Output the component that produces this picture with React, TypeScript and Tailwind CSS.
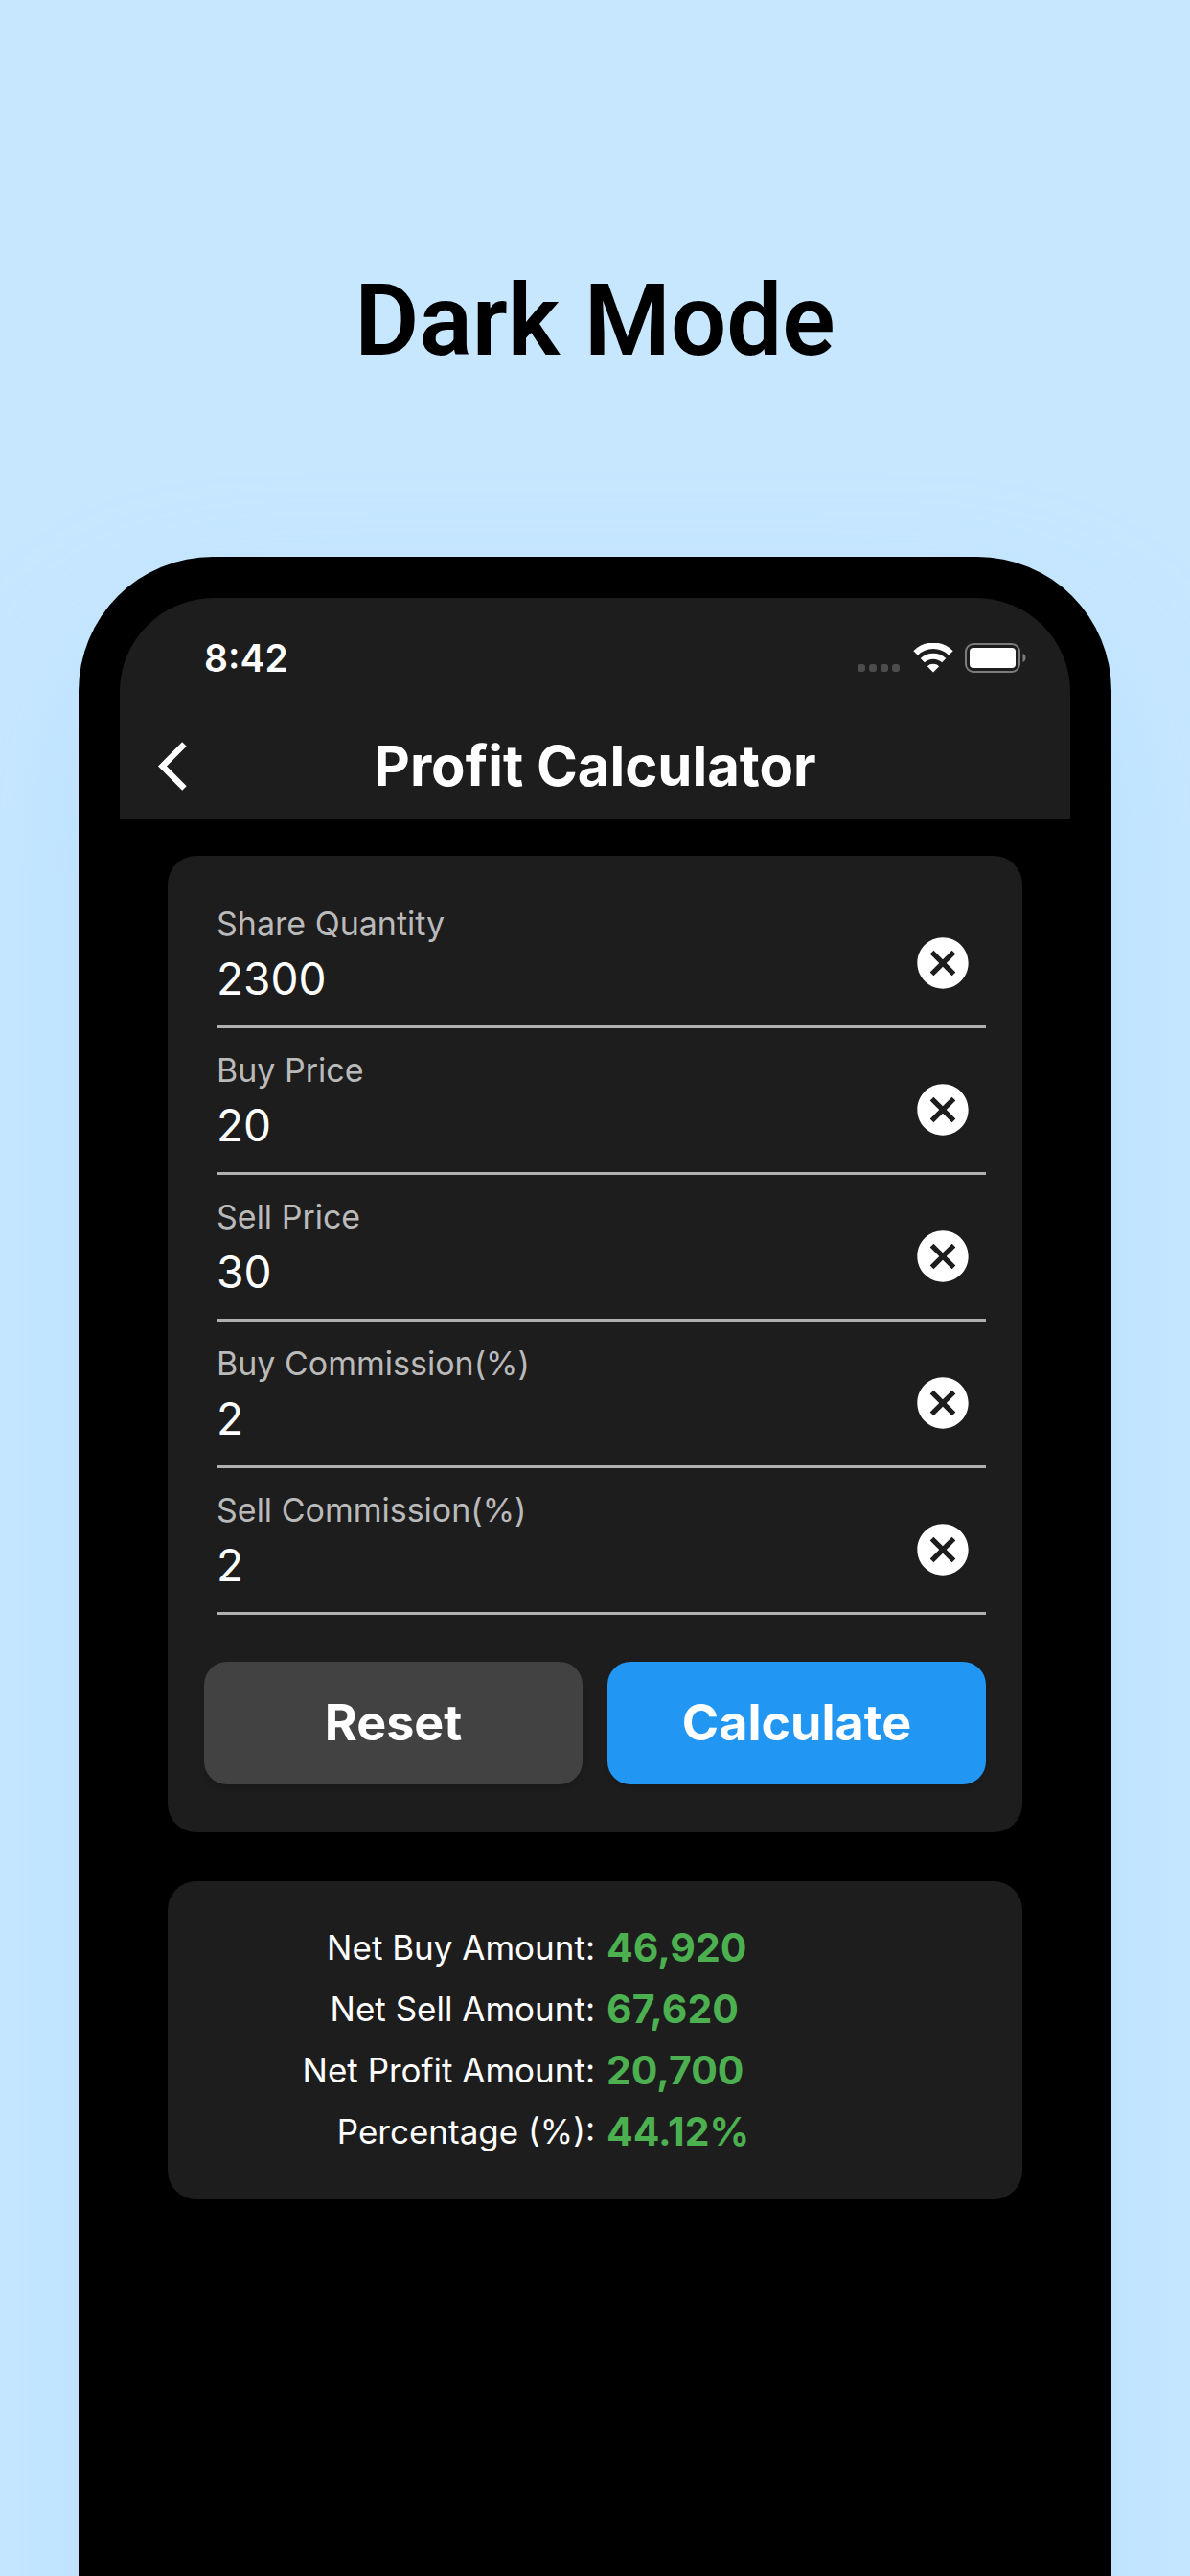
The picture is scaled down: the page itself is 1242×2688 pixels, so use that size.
import { useState } from "react";
import { MdArrowBackIos, MdCancel } from "react-icons/md";

const initialFields = [
  { id: "quantity", label: "Share Quantity", value: "2300" },
  { id: "buy", label: "Buy Price", value: "20" },
  { id: "sell", label: "Sell Price", value: "30" },
  { id: "buy-commission", label: "Buy Commission(%)", value: "2" },
  { id: "sell-commission", label: "Sell Commission(%)", value: "2" },
];

const results = [
  { label: "Net Buy Amount:", value: "46,920" },
  { label: "Net Sell Amount:", value: "67,620" },
  { label: "Net Profit Amount:", value: "20,700" },
  { label: "Percentage (%):", value: "44.12%" },
];

function StatusBar() {
  return (
    <div className="flex items-center justify-between pt-10 pr-[46px] pl-22">
      <span className="text-[39px] leading-[46px] font-semibold">8:42</span>
      <div className="flex items-center">
        <svg width="44" height="32" viewBox="0 0 44 32" fill="#4c4c4d" aria-hidden="true">
          <rect x="0" y="22" width="8" height="8" rx="3" />
          <rect x="12" y="22" width="8" height="8" rx="3" />
          <rect x="24" y="22" width="8" height="8" rx="3" />
          <rect x="36" y="22" width="8" height="8" rx="3" />
        </svg>
        <svg className="ml-3.5" width="42" height="32" viewBox="0 0 42 32" fill="none" aria-label="Wi-Fi">
          <path d="M2.6 10.400a26 26 0 0 1 36.8 0" stroke="white" strokeWidth="6.4" />
          <path d="M9.8 18.2a16 16 0 0 1 22.4 0" stroke="white" strokeWidth="6" />
          <path d="M14.8 24.2a9 9 0 0 1 12.4 0L21 30.5z" fill="white" />
        </svg>
        <svg className="ml-3" width="64" height="32" viewBox="0 0 64 32" fill="none" aria-label="Battery">
          <rect x="1" y="1" width="56" height="29" rx="8" stroke="#7c7c7d" strokeWidth="2" />
          <rect x="5" y="5" width="48" height="21" rx="4" fill="white" />
          <path d="M60.5 11c4 1.400 4 7.600 0 9z" fill="#7c7c7d" />
        </svg>
      </div>
    </div>
  );
}

export default function App() {
  const [fields, setFields] = useState(initialFields);
  const update = (id: string, value: string) =>
    setFields(fields.map((f) => (f.id === id ? { ...f, value } : f)));

  return (
    <main className="flex h-screen min-h-[2400px] flex-col overflow-hidden bg-[#c7e7ff] font-['Inter',sans-serif] text-white">
      <h1 className="pt-[273px] pb-[184px] text-center font-['Roboto',sans-serif] text-[103px] leading-[124px] font-semibold text-black">
        Dark Mode
      </h1>
      <div className="mx-[82px] -mb-40 flex-1 rounded-t-[140px] bg-black px-[43px] pt-[43px] shadow-[0_80px_160px_rgba(150,210,255,0.3)]">
        <header className="h-[231px] rounded-t-[98px] bg-[#1d1d1e]">
          <StatusBar />
          <div className="grid grid-cols-[96px_1fr_96px] items-center pt-[55px]">
            <button aria-label="Back" className="pl-10">
              <MdArrowBackIos size={61} />
            </button>
            <h2 className="text-center text-[58px] leading-[68px] font-bold">Profit Calculator</h2>
          </div>
        </header>

        <section className="mx-[50px] mt-[38px] rounded-[30px] bg-[#1d1d1e] px-[38px] pt-[27px] pb-[50px]">
          {fields.map((f) => (
            <div key={f.id} className="ml-[13px] flex h-[153px] items-center border-b-[3px] border-[#b0b0b1] pr-[13px]">
              <div className="min-w-0 flex-1 pt-1.5">
                <label htmlFor={f.id} className="block text-[34px] leading-[46px] text-[#bababb]">
                  {f.label}
                </label>
                <input
                  id={f.id}
                  value={f.value}
                  inputMode="decimal"
                  onChange={(e) => update(f.id, e.target.value)}
                  className="block w-full bg-transparent text-[46px] leading-[68px] outline-none"
                />
              </div>
              <button aria-label={"Clear " + f.label} onClick={() => update(f.id, "")} className="pt-5">
                <MdCancel size={64} />
              </button>
            </div>
          ))}
          <div className="mt-[49px] grid grid-cols-2 gap-[26px] text-[52px] font-bold">
            <button className="h-32 rounded-3xl bg-[#424242] shadow-md">Reset</button>
            <button className="h-32 rounded-3xl bg-[#2196f3] shadow-md">Calculate</button>
          </div>
        </section>

        <section className="mx-[50px] mt-[51px] rounded-[30px] bg-[#1d1d1e] pt-[37px] pb-[39px]">
          <dl>
            {results.map((r) => (
              <div key={r.label} className="grid h-16 grid-cols-2 items-center">
                <dt className="text-right text-[35px] leading-[44px]">{r.label}</dt>
                <dd className="pl-3 text-[41px] leading-[48px] font-bold text-[#4caf50]">{r.value}</dd>
              </div>
            ))}
          </dl>
        </section>
      </div>
    </main>
  );
}
